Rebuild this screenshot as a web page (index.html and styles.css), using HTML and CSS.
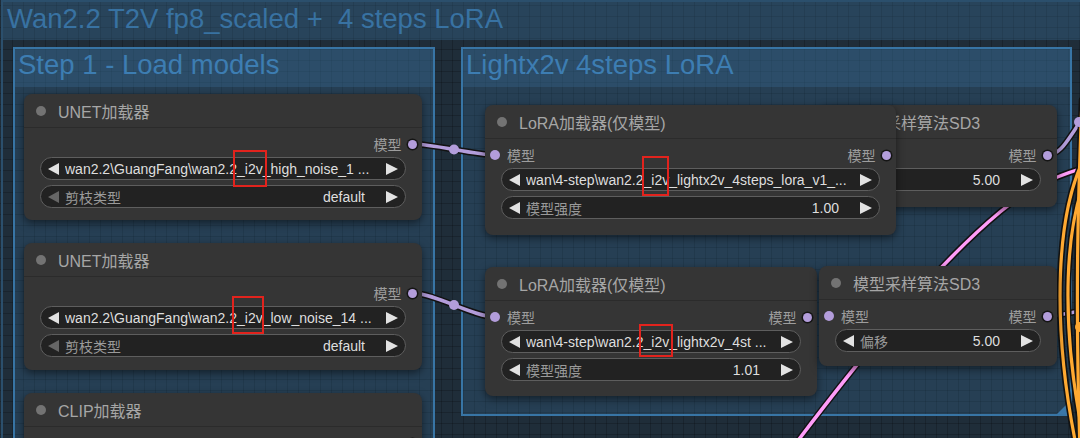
FILE: index.html
```html
<!DOCTYPE html>
<html lang="zh">
<head>
<meta charset="utf-8">
<title>Wan2.2 T2V</title>
<link rel="stylesheet" href="styles.css">
</head>
<body>
<div class="canvas">
  <div class="group outer"><div class="gtitle">Wan2.2 T2V fp8_scaled +&nbsp; 4 steps LoRA</div></div>
  <div class="group inner step1"><div class="gtitle">Step 1 - Load models</div></div>
  <div class="group inner lightx"><div class="gtitle">Lightx2v 4steps LoRA</div><div class="resize"></div></div>

  <svg class="links" width="1080" height="438" viewBox="0 0 1080 438">
    <g class="outline">
      <path d="M412.5 144 C434 144 474 155 495 155"/>
      <path d="M412.5 293 C434 293 474 317 495 317"/>
      <path d="M770 478 C850 370 930 270 1000 212 C1030 187 1055 176 1090 166"/>
      <path d="M1047 155 C1062 155 1068 138 1085 115"/>
      <path d="M1047 316 C1062 316 1068 312 1090 310"/>
    </g>
    <g class="model">
      <path d="M412.5 144 C434 144 474 155 495 155"/>
      <path d="M412.5 293 C434 293 474 317 495 317"/>
      <path d="M1047 155 C1062 155 1068 138 1085 115"/>
      <path d="M1047 316 C1062 316 1068 312 1090 310"/>
    </g>
    <path class="latent" d="M770 478 C850 370 930 270 1000 212 C1030 187 1055 176 1090 166"/>
    <circle class="mdot" cx="454" cy="149.5" r="5"/>
    <circle class="mdot" cx="454" cy="305" r="5"/>
    <g class="outline">
      <path d="M1082 100 C1078 200 1075 300 1080 450"/>
      <path d="M1095 140 C1052 200 1052 330 1077 450"/>
      <path d="M1100 150 C1060 210 1060 330 1086 450"/>
    </g>
    <g class="cond">
      <path d="M1082 100 C1078 200 1075 300 1080 450"/>
      <path d="M1095 140 C1052 200 1052 330 1077 450"/>
      <path d="M1100 150 C1060 210 1060 330 1086 450"/>
    </g>
    <circle class="mdot" cx="1079" cy="122" r="5"/>
    <circle class="cdot" cx="1080" cy="327" r="5"/>
  </svg>

  <div class="node unet1">
    <div class="ntitle"><span class="tdot"></span>UNET加载器</div>
    <div class="nbody">
      <div class="slots"><span class="slot out">模型<i class="dot"></i></span></div>
      <div class="widget"><svg class="arr" viewBox="0 0 11 12"><polygon points="11,0 11,12 0,6"/></svg><span class="wname">wan2.2\GuangFang\wan2.2_i2v_high_noise_1 ...</span><svg class="arr r" viewBox="0 0 12 12"><polygon points="0,0 0,12 12,6"/></svg></div>
      <div class="widget"><svg class="arr dis" viewBox="0 0 11 12"><polygon points="11,0 11,12 0,6"/></svg><span class="wlabel">剪枝类型</span><span class="wval">default</span><svg class="arr r" viewBox="0 0 12 12"><polygon points="0,0 0,12 12,6"/></svg></div>
    </div>
  </div>

  <div class="node unet2">
    <div class="ntitle"><span class="tdot"></span>UNET加载器</div>
    <div class="nbody">
      <div class="slots"><span class="slot out">模型<i class="dot"></i></span></div>
      <div class="widget"><svg class="arr" viewBox="0 0 11 12"><polygon points="11,0 11,12 0,6"/></svg><span class="wname">wan2.2\GuangFang\wan2.2_i2v_low_noise_14 ...</span><svg class="arr r" viewBox="0 0 12 12"><polygon points="0,0 0,12 12,6"/></svg></div>
      <div class="widget"><svg class="arr dis" viewBox="0 0 11 12"><polygon points="11,0 11,12 0,6"/></svg><span class="wlabel">剪枝类型</span><span class="wval">default</span><svg class="arr r" viewBox="0 0 12 12"><polygon points="0,0 0,12 12,6"/></svg></div>
    </div>
  </div>

  <div class="node clip">
    <div class="ntitle"><span class="tdot"></span>CLIP加载器</div>
    <div class="nbody">
      <div class="slots"><span class="slot out">CLIP<i class="dot clipdot"></i></span></div>
    </div>
  </div>

  <div class="node sd3a">
    <div class="ntitle"><span class="tdot"></span>模型采样算法SD3</div>
    <div class="nbody">
      <div class="slots"><span class="slot in"><i class="dot"></i></span><span class="slot out">模型<i class="dot"></i></span></div>
      <div class="widget"><svg class="arr" viewBox="0 0 11 12"><polygon points="11,0 11,12 0,6"/></svg><span class="wlabel"></span><span class="wval">5.00</span><svg class="arr r" viewBox="0 0 12 12"><polygon points="0,0 0,12 12,6"/></svg></div>
    </div>
  </div>

  <div class="node lora1">
    <div class="ntitle"><span class="tdot"></span>LoRA加载器(仅模型)</div>
    <div class="nbody">
      <div class="slots"><span class="slot in"><i class="dot"></i>模型</span><span class="slot out">模型<i class="dot"></i></span></div>
      <div class="widget"><svg class="arr" viewBox="0 0 11 12"><polygon points="11,0 11,12 0,6"/></svg><span class="wname">wan\4-step\wan2.2_i2v_lightx2v_4steps_lora_v1_...</span><svg class="arr r" viewBox="0 0 12 12"><polygon points="0,0 0,12 12,6"/></svg></div>
      <div class="widget"><svg class="arr" viewBox="0 0 11 12"><polygon points="11,0 11,12 0,6"/></svg><span class="wlabel">模型强度</span><span class="wval">1.00</span><svg class="arr r" viewBox="0 0 12 12"><polygon points="0,0 0,12 12,6"/></svg></div>
    </div>
  </div>

  <div class="node lora2">
    <div class="ntitle"><span class="tdot"></span>LoRA加载器(仅模型)</div>
    <div class="nbody">
      <div class="slots"><span class="slot in"><i class="dot"></i>模型</span><span class="slot out">模型<i class="dot"></i></span></div>
      <div class="widget"><svg class="arr" viewBox="0 0 11 12"><polygon points="11,0 11,12 0,6"/></svg><span class="wname">wan\4-step\wan2.2_i2v_lightx2v_4st ...</span><svg class="arr r" viewBox="0 0 12 12"><polygon points="0,0 0,12 12,6"/></svg></div>
      <div class="widget"><svg class="arr" viewBox="0 0 11 12"><polygon points="11,0 11,12 0,6"/></svg><span class="wlabel">模型强度</span><span class="wval">1.01</span><svg class="arr r" viewBox="0 0 12 12"><polygon points="0,0 0,12 12,6"/></svg></div>
    </div>
  </div>

  <div class="node sd3b">
    <div class="ntitle"><span class="tdot"></span>模型采样算法SD3</div>
    <div class="nbody">
      <div class="slots"><span class="slot in"><i class="dot"></i>模型</span><span class="slot out">模型<i class="dot"></i></span></div>
      <div class="widget"><svg class="arr" viewBox="0 0 11 12"><polygon points="11,0 11,12 0,6"/></svg><span class="wlabel">偏移</span><span class="wval">5.00</span><svg class="arr r" viewBox="0 0 12 12"><polygon points="0,0 0,12 12,6"/></svg></div>
    </div>
  </div>

  <div class="mark m1"></div>
  <div class="mark m2"></div>
  <div class="mark m3"></div>
  <div class="mark m4"></div>
</div>
</body>
</html>
```
FILE: styles.css
```css
* { box-sizing: border-box; }
html, body { margin: 0; padding: 0; background: #1e2c38; overflow: hidden; }
body { font-family: "Liberation Sans", Arial, "Noto Sans CJK SC", sans-serif; }

.canvas {
  position: relative;
  width: 1080px;
  height: 438px;
  overflow: hidden;
  background-color: #1f2d39;
  background-image:
    linear-gradient(rgba(0,0,0,0.2) 1px, transparent 1px),
    linear-gradient(90deg, rgba(0,0,0,0.2) 1px, transparent 1px);
  background-size: 11px 11px;
  background-position: 1px 5px;
}

/* groups */
.group { position: absolute; }
.gtitle {
  font-size: 27.5px;
  white-space: pre;
  overflow: hidden;
}
.outer {
  left: 1px; top: 0;
  width: 1110px; height: 480px;
  border-top: 2px solid #2b4f6c;
  border-left: 2px solid #2b4f6c;
}
.outer .gtitle {
  height: 38px;
  line-height: 33px;
  padding-left: 4px;
  color: #3872a2;
  background: rgba(60,115,160,0.33);
}
.inner {
  border: 2px solid #3875a5;
  background: rgba(60,118,168,0.25);
}
.inner .gtitle {
  height: 38px;
  line-height: 31px;
  padding-left: 3px;
  color: #3d7db2;
  background: rgba(60,118,168,0.26);
}
.step1 { left: 13px; top: 47px; width: 422px; height: 440px; }
.lightx { left: 461px; top: 47px; width: 611px; height: 369px; }
.resize {
  position: absolute;
  right: 0; bottom: 0;
  width: 13px; height: 13px;
  background: #3a77a8;
  clip-path: polygon(100% 0, 100% 100%, 0 100%);
}

/* links */
.links { position: absolute; left: 0; top: 0; }
.links path { fill: none; stroke-linecap: round; }
.outline path { stroke: #121212; stroke-width: 6.5; }
.model path { stroke: #b39ddb; stroke-width: 3.5; }
.latent { stroke: #ff9cf9; stroke-width: 3.5; }
.cond path { stroke: #ffa931; stroke-width: 3.2; }
.mdot { fill: #b39ddb; }
.cdot { fill: #ffa931; }

/* nodes */
.node {
  position: absolute;
  background: #353535;
  border-radius: 8px;
  box-shadow: 0 3px 8px rgba(0,0,0,0.5);
}
.ntitle {
  height: 34px;
  display: flex;
  align-items: center;
  gap: 12px;
  padding-left: 12px;
  font-size: 16px;
  color: #a6a6a6;
  border-bottom: 1px solid #2b2b2b;
  white-space: nowrap;
  overflow: hidden;
}
.tdot {
  width: 10px; height: 10px;
  border-radius: 50%;
  background: #737373;
  flex: none;
}
.nbody { padding-top: 6px; }
.slots {
  height: 20px;
  display: flex;
  align-items: center;
  padding: 0 5px;
  font-size: 14px;
  color: #9d9d9d;
  white-space: nowrap;
}
.slot { display: flex; align-items: center; }
.slot.in { gap: 7px; }
.slot.out { margin-left: auto; gap: 6px; }
.dot {
  display: block;
  width: 10px; height: 10px;
  border-radius: 50%;
  background: #b39ddb;
}
.slot.out .dot {
  width: 9px; height: 9px;
  margin-right: 0.5px;
  box-shadow: 0 0 0 1.5px #151515;
}
.slot.out .clipdot { background: #ffd500; }

.widget {
  height: 23px;
  margin: 3px 16px 0;
  display: flex;
  align-items: center;
  padding: 0 7px;
  border: 1px solid #5e5e5e;
  border-radius: 12px;
  background: #222222;
  font-size: 14px;
  color: #dedede;
  white-space: nowrap;
}
.widget + .widget { margin-top: 5px; }
.arr { width: 11px; height: 12px; flex: none; fill: #e2e2e2; }
.arr.r { width: 12px; }
.arr.dis { fill: #666666; }
.wname { flex: 1; min-width: 0; overflow: hidden; margin: 0 6px 0 6px; }
.wlabel { flex: 1; margin-left: 6px; color: #9a9a9a; }
.wval { margin-right: 21px; }

.unet1 { left: 24px; top: 94px; width: 398px; height: 126px; }
.unet2 { left: 24px; top: 243px; width: 398px; height: 127px; }
.clip  { left: 24px; top: 393px; width: 398px; height: 90px; }
.lora1 { left: 485px; top: 105px; width: 411px; height: 130px; }
.sd3a  { left: 819px; top: 105px; width: 238px; height: 102px; }
.lora2 { left: 485px; top: 267px; width: 332px; height: 129px; }
.sd3b  { left: 819px; top: 266px; width: 238px; height: 100px; }

/* annotation boxes */
.mark { position: absolute; border: 2px solid #e2231d; }
.m1 { left: 233px; top: 150px; width: 34px; height: 37px; }
.m2 { left: 232px; top: 296px; width: 32px; height: 38px; }
.m3 { left: 642px; top: 156px; width: 27px; height: 40px; }
.m4 { left: 639px; top: 324px; width: 34px; height: 33px; }
```
